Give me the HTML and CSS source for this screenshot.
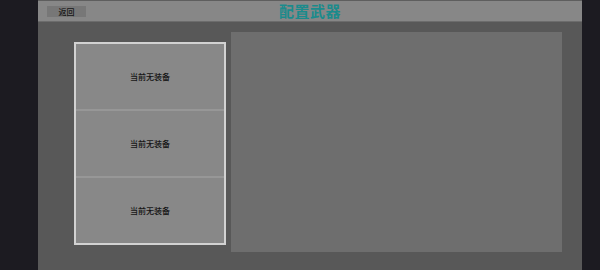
FILE: index.html
```html
<!DOCTYPE html>
<html>
<head>
<meta charset="utf-8">
<link rel="stylesheet" href="styles.css">
</head>
<body>
<div class="main">
  <div class="header">
    <div class="left"><button class="back">返回</button></div>
    <div class="title">配置武器</div>
    <div class="right"></div>
  </div>
  <div class="content">
    <div class="slots">
      <div class="slot">当前无装备</div>
      <div class="slot">当前无装备</div>
      <div class="slot">当前无装备</div>
    </div>
    <div class="detail"></div>
  </div>
</div>
</body>
</html>
```
FILE: styles.css
```css
html, body {
  margin: 0;
  padding: 0;
  background: #1c1b21;
  font-family: "Noto Sans CJK SC", "Noto Sans", sans-serif;
}
body {
  padding-left: 38px;
  width: 600px;
  height: 270px;
  box-sizing: border-box;
  overflow: hidden;
}
.main {
  width: 544px;
  height: 270px;
  background: #585858;
  display: flex;
  flex-direction: column;
}
.header {
  height: 22px;
  box-sizing: border-box;
  border-top: 1px solid #5e5e5e;
  border-bottom: 1px solid #6c6c6c;
  background: #878787;
  display: grid;
  grid-template-columns: 1fr auto 1fr;
  align-items: center;
}
.back {
  margin-left: 9px;
  width: 39px;
  height: 11px;
  padding: 0;
  border: none;
  background: #777777;
  color: #151515;
  font-family: "Noto Sans CJK SC", sans-serif;
  font-size: 8px;
  font-weight: 500;
  line-height: 11px;
  display: block;
  margin-top: 1px;
}
.title {
  color: #1b8b8c;
  font-size: 15px;
  font-weight: bold;
  line-height: 18px;
  letter-spacing: 0.5px;
}
.content {
  display: flex;
  align-items: flex-start;
  padding-top: 10px;
  padding-left: 36px;
  gap: 5px;
}
.slots {
  margin-top: 10px;
  width: 152px;
  height: 203px;
  box-sizing: border-box;
  border: 2px solid #d2d2d2;
  background: #888888;
  display: flex;
  flex-direction: column;
}
.slot {
  flex: 1;
  display: flex;
  align-items: center;
  justify-content: center;
  font-size: 8px;
  font-weight: 500;
  color: #151515;
  border-bottom: 2px solid #979797;
}
.slot:last-child {
  border-bottom: none;
}
.detail {
  width: 331px;
  height: 220px;
  background: #6e6e6e;
}
```
